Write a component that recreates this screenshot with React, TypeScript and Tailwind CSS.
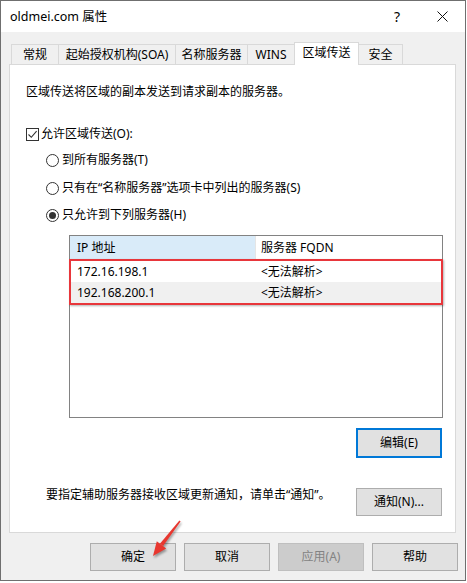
import React from 'react';

const font = "font-['Noto_Sans','Noto_Sans_CJK_SC',sans-serif]";

function Tab({ label, width, active }: { label: string; width: number; active?: boolean }) {
  if (active) {
    return (
      <div
        className="relative z-10 -mb-px h-[23px] bg-white border border-b-0 border-[#d9d9d9] flex items-center justify-center pb-[2px]"
        style={{ width }}
      >
        {label}
      </div>
    );
  }
  return (
    <div
      className="h-[20px] bg-[#f0f0f0] border border-b-0 border-[#d9d9d9] -ml-px flex items-center justify-center first:ml-0"
      style={{ width }}
    >
      {label}
    </div>
  );
}

function Radio({ checked, label }: { checked?: boolean; label: string }) {
  return (
    <div className="flex items-center h-[16px] pl-[36px]">
      <span className="w-[13px] h-[13px] rounded-full border border-[#333333] bg-white flex items-center justify-center">
        {checked && <span className="w-[7px] h-[7px] rounded-full bg-[#333333]" />}
      </span>
      <span className="ml-[3px]">{label}</span>
    </div>
  );
}

function Btn({ label, disabled, focused, className = '' }: { label: string; disabled?: boolean; focused?: boolean; className?: string }) {
  let cls = 'bg-[#e1e1e1] border border-[#adadad] text-black';
  if (disabled) cls = 'bg-[#cccccc] border border-[#bfbfbf] text-[#838383]';
  if (focused) cls = 'bg-[#e1e1e1] border-2 border-[#0078d7] text-black';
  return (
    <div className={`w-[86px] h-[28px] flex items-center justify-center ${cls} ${className}`}>{label}</div>
  );
}

function Arrow() {
  return (
    <svg
      className="absolute left-[140px] top-[510px] drop-shadow-[1px_2px_1px_rgba(0,0,0,0.35)]"
      width="50"
      height="55"
      viewBox="0 0 50 55"
    >
      <polygon points="40.6,11.5 39.4,10.5 19.9,33.7 23.1,36.1" fill="#e8372f" />
      <polygon points="13,46 26.2,38.6 16.8,31.2" fill="#e8372f" />
    </svg>
  );
}

export default function App() {
  return (
    <div className={`relative w-[467px] h-[583px] bg-white text-[12px] leading-[16px] text-black ${font}`}>
      <div className="w-[466px] h-[581px] border border-[#6f6f6f] flex flex-col">
        {/* title bar */}
        <div className="h-[31px] bg-white flex items-center pl-[9px] shrink-0">
          <span className="text-[12.5px]">oldmei.com 属性</span>
          <span className="ml-auto text-[14px] mr-[37px]">?</span>
          <svg width="11" height="11" viewBox="0 0 11 11" className="mr-[17px]">
            <path d="M0.5 0.5 L10.5 10.5 M10.5 0.5 L0.5 10.5" stroke="#111" strokeWidth="1" />
          </svg>
        </div>

        {/* body */}
        <div className="flex-1 bg-[#f0f0f0] flex flex-col pl-[8px] pr-[9px] pt-[10px]">
          <div className="flex items-end ml-[2px] h-[22px]">
            <Tab label="常规" width={48} />
            <Tab label="起始授权机构(SOA)" width={118} />
            <Tab label="名称服务器" width={73} />
            <Tab label="WINS" width={48} />
            <div className="-ml-px">
              <Tab label="区域传送" width={65} active />
            </div>
            <div className="-ml-px flex">
              <Tab label="安全" width={45} />
            </div>
          </div>

          {/* panel */}
          <div className="h-[469px] bg-white border border-[#d9d9d9] flex flex-col">
            <div className="pl-[16px] pt-[19px]">区域传送将区域的副本发送到请求副本的服务器。</div>

            <div className="flex items-center h-[16px] pl-[16px] mt-[26px]">
              <span className="w-[13px] h-[13px] border border-[#333333] bg-white flex items-center justify-center">
                <svg width="11" height="11" viewBox="0 0 11 11">
                  <path d="M1.5 5.5 L4.3 8.3 L9.6 2.2" stroke="#333" strokeWidth="1.1" fill="none" />
                </svg>
              </span>
              <span className="ml-[2px]">允许区域传送(O):</span>
            </div>

            <div className="mt-[10px]">
              <Radio label="到所有服务器(T)" />
            </div>
            <div className="mt-[12px]">
              <Radio label="只有在“名称服务器”选项卡中列出的服务器(S)" />
            </div>
            <div className="mt-[11px]">
              <Radio checked label="只允许到下列服务器(H)" />
            </div>

            {/* list */}
            <div className="mt-[12px] ml-[59px] mr-[12px] h-[183px] border border-[#828282] bg-white flex flex-col">
              <div className="flex h-[23px] shrink-0">
                <div className="w-[185px] bg-[#d9ebf9] flex items-center pl-[7px]">IP 地址</div>
                <div className="flex-1 border-l border-[#e5e5e5] flex items-center pl-[5px]">服务器 FQDN</div>
              </div>
              <div className="border-2 border-[#e8363b] shadow-[1px_1px_2px_rgba(0,0,0,0.3)] -mx-px">
                <div className="flex h-[21px] items-center">
                  <div className="w-[184px] pl-[6px]">172.16.198.1</div>
                  <div className="pl-[6px]">&lt;无法解析&gt;</div>
                </div>
                <div className="flex h-[21px] items-center bg-[#f0f0f0]">
                  <div className="w-[184px] pl-[6px]">192.168.200.1</div>
                  <div className="pl-[6px]">&lt;无法解析&gt;</div>
                </div>
              </div>
            </div>

            <div className="flex justify-end mr-[13px] mt-[10px]">
              <Btn label="编辑(E)" focused className="h-[30px]" />
            </div>

            <div className="flex items-start mt-[30px] pl-[36px] mr-[13px]">
              <span className="mt-[-1px]">要指定辅助服务器接收区域更新通知，请单击“通知”。</span>
              <Btn label="通知(N)..." className="ml-auto" />
            </div>
          </div>

          {/* bottom buttons */}
          <div className="flex justify-end gap-[8px] mt-[10px] pr-[7px] -mr-[9px]">
            <Btn label="确定" />
            <Btn label="取消" />
            <Btn label="应用(A)" disabled />
            <Btn label="帮助" />
          </div>
        </div>
      </div>
      <Arrow />
    </div>
  );
}
